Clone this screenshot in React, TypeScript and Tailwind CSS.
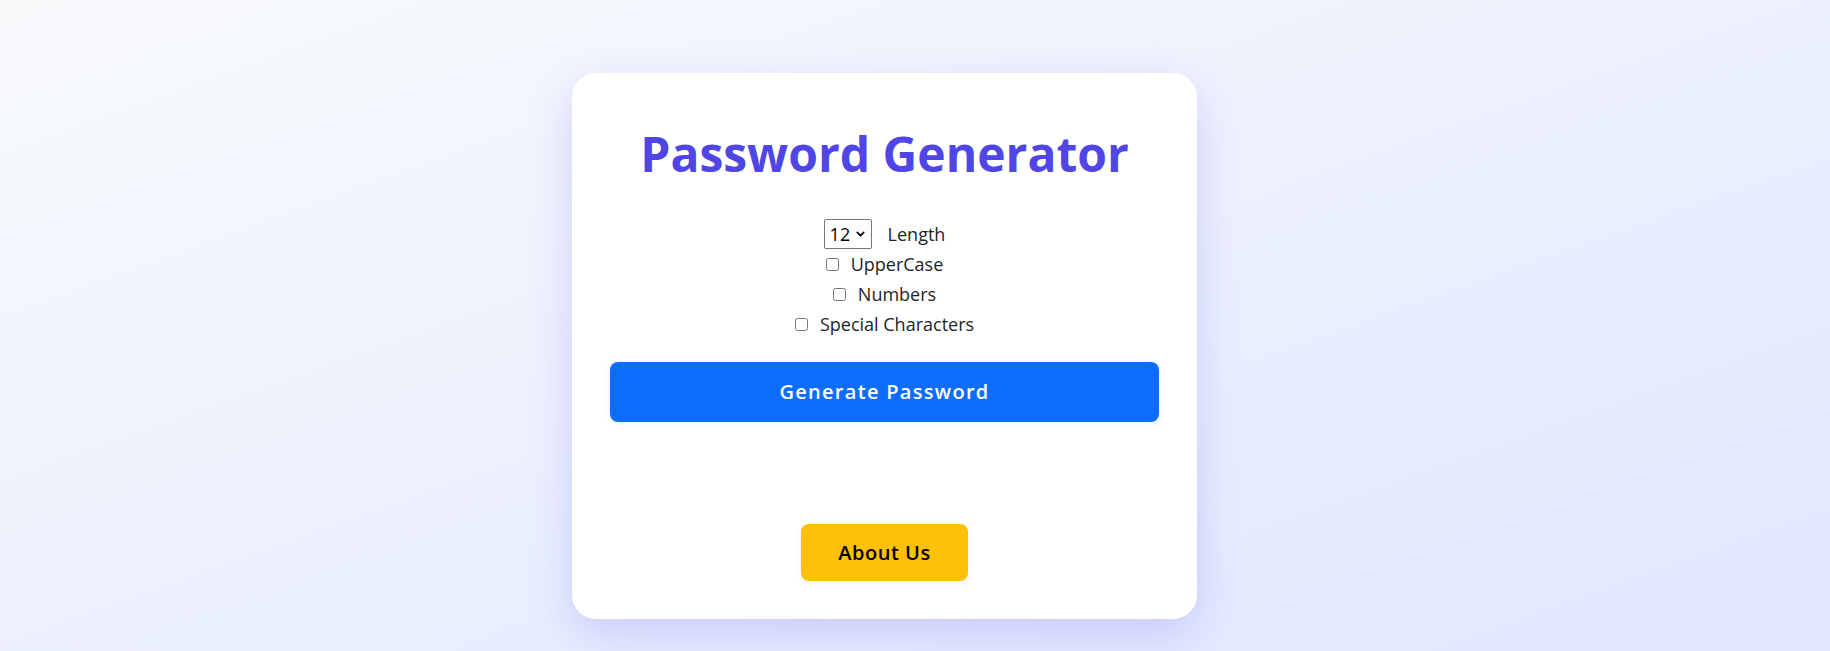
import React, { useState } from 'react';
import { ChevronDown } from 'lucide-react';

const OPTIONS = [
  { id: 'upper', label: 'UpperCase' },
  { id: 'numbers', label: 'Numbers' },
  { id: 'special', label: 'Special Characters' },
];

export default function App() {
  const [length, setLength] = useState('12');
  const [checked, setChecked] = useState<Record<string, boolean>>({});
  const [password, setPassword] = useState('');

  const generate = () => {
    let chars = 'abcdefghijklmnopqrstuvwxyz';
    if (checked.upper) chars += 'ABCDEFGHIJKLMNOPQRSTUVWXYZ';
    if (checked.numbers) chars += '0123456789';
    if (checked.special) chars += '!@#$%^&*()_+';
    let out = '';
    for (let i = 0; i < Number(length); i++) out += chars[Math.floor(Math.random() * chars.length)];
    setPassword(out);
  };

  return (
    <div className="min-h-screen bg-gradient-to-br from-slate-50 to-indigo-100 flex justify-center pt-[73px] pb-8 pr-[61px] font-['Open_Sans',sans-serif] text-[#212529]">
      <div className="w-[625px] h-fit bg-white rounded-3xl px-[38px] pt-[38px] pb-[38px] text-center shadow-[0_15px_45px_rgba(79,70,229,0.2)]">
        {/* Title */}
        <h1 className="mt-[19px] text-[48px] leading-[48px] font-bold text-[#4f46e5]">Password Generator</h1>

        {/* Options */}
        <div className="mt-[41px] flex flex-col items-center text-[18px] leading-[30px]">
          <div className="flex items-center gap-4 h-[30px]">
            <div className="relative">
              <select
                value={length}
                onChange={(e) => setLength(e.target.value)}
                className="appearance-none w-[48px] h-[30px] border border-[#767676] rounded-[2px] bg-white pl-[5px] text-[18px] leading-[28px] text-black"
              >
                {[8, 10, 12, 14, 16, 20].map((n) => (
                  <option key={n} value={n}>{n}</option>
                ))}
              </select>
              <ChevronDown size={13} strokeWidth={3} className="absolute right-[5px] top-1/2 -translate-y-1/2 pointer-events-none text-black" />
            </div>
            <span>Length</span>
          </div>
          {OPTIONS.map((o) => (
            <label key={o.id} className="flex items-center gap-3 h-[30px]">
              <input
                type="checkbox"
                className="m-0 w-[13px] h-[13px]"
                checked={!!checked[o.id]}
                onChange={(e) => setChecked({ ...checked, [o.id]: e.target.checked })}
              />
              <span>{o.label}</span>
            </label>
          ))}
        </div>

        {/* Generate */}
        <button
          onClick={generate}
          className="mt-[23px] w-full h-[60px] rounded-lg bg-[#0d6efd] text-white text-[20px] font-semibold tracking-[0.065em] shadow-[0_2px_8px_rgba(13,110,253,0.08)]"
        >
          Generate Password
        </button>

        <div className="h-[102px] flex items-center justify-center text-lg font-mono">{password}</div>

        <button className="h-[57px] px-[37px] rounded-lg bg-[#ffc107] text-black text-[20px] font-semibold tracking-wide shadow-[0_2px_8px_rgba(0,0,0,0.06)]">
          About Us
        </button>
      </div>
    </div>
  );
}
